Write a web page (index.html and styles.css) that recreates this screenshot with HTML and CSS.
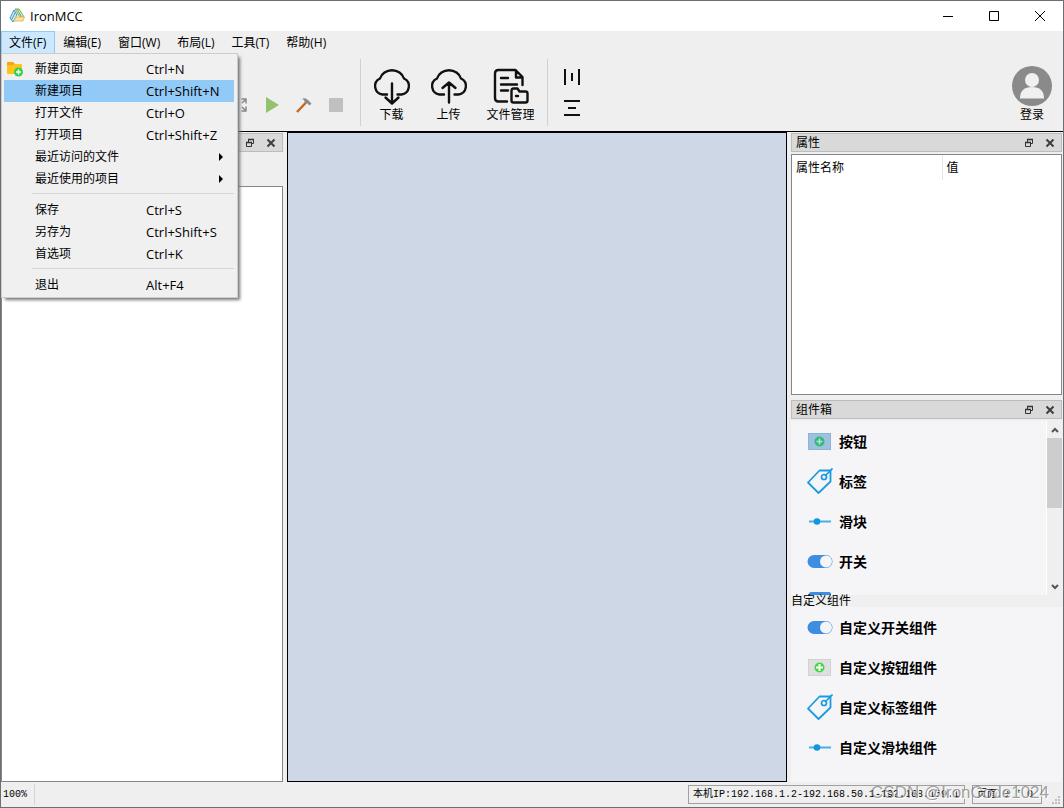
FILE: index.html
```html
<!DOCTYPE html>
<html lang="zh-CN">
<head>
<meta charset="utf-8">
<title>IronMCC</title>
<link rel="stylesheet" href="styles.css">
</head>
<body>
<svg class="defs" aria-hidden="true">
  <symbol id="float" viewBox="0 0 10 10"><path d="M3.500 4V1.500H8.500V5.500H7M1.500 4.500H6.500V8.500H1.500Z" fill="none" stroke="#333"/><path d="M3 1.500H9M1 4.500H7" stroke="#333" stroke-width="1.500"/></symbol>
  <symbol id="close" viewBox="0 0 10 10"><path d="M1.500 1.500L8.500 8.500M8.500 1.500L1.500 8.500" stroke="#3c3f3f" stroke-width="2"/></symbol>
  <symbol id="tag" viewBox="0 0 26 26"><path d="M1 14.500L12.500 2.500H23.500V13.500L11.500 25Z" fill="none" stroke="#1a9be0" stroke-width="1.800" stroke-linejoin="round"/><circle cx="17" cy="9" r="2.500" fill="none" stroke="#1a9be0" stroke-width="1.700"/><path d="M18 8L25.500 .5" stroke="#1a9be0" stroke-width="1.700"/></symbol>
  <symbol id="slider" viewBox="0 0 26 26"><path d="M2 13.500H24" stroke="#48aee6" stroke-width="2"/><circle cx="10" cy="13.500" r="3.300" fill="#1296db"/></symbol>
  <symbol id="switch" viewBox="0 0 26 26"><rect x=".5" y="7" width="25" height="13" rx="6.500" fill="#3d8ee0"/><circle cx="19" cy="13.500" r="6" fill="#f5f5f8"/></symbol>
  <symbol id="button-blue" viewBox="0 0 26 26"><rect x="1.500" y="5.500" width="22" height="16" fill="#9fc1e1" stroke="#8fb3d2"/><circle cx="12.500" cy="13.500" r="5" fill="#2ebd72"/><path d="M9.500 13.500H15.500M12.500 10.500V16.500" stroke="#c0d9ec" stroke-width="1.600"/></symbol>
  <symbol id="button-grey" viewBox="0 0 26 26"><rect x="1.500" y="5.500" width="22" height="16" fill="#dfdfdf" stroke="#d2d2d2"/><circle cx="12.500" cy="13.500" r="5" fill="#43d843"/><path d="M9 13.500H16M12.500 10V17" stroke="#fff" stroke-width="2"/></symbol>
</svg>
<div class="window">
  <header class="titlebar">
    <svg class="logo" viewBox="0 0 16 16"><path d="M6 1H10L15 9H11Z" fill="#dcebd0" stroke="#6fae5a"/><path d="M8 1L12.500 9" stroke="#6fae5a"/><path d="M5 2L8 7L4 14L1 10Z" fill="#d4ecf7" stroke="#3d95c4"/><path d="M6.500 4L2.500 12" stroke="#3d95c4"/><path d="M7 9H15.500L14 13H5Z" fill="#fae3a5" stroke="#e5bd61"/></svg>
    <h1 class="title">IronMCC</h1>
    <button class="winbtn" aria-label="最小化"><svg viewBox="0 0 10 10"><path d="M0 5.500H10"/></svg></button>
    <button class="winbtn" aria-label="最大化"><svg viewBox="0 0 10 10"><path d="M.5 .5H9.500V9.500H.5Z"/></svg></button>
    <button class="winbtn" aria-label="关闭"><svg viewBox="0 0 10 10"><path d="M0 0L10 10M10 0L0 10"/></svg></button>
  </header>
  <nav class="menubar">
    <div class="menuwrap">
      <button class="menu open" aria-expanded="true">文件(F)</button>
      <div class="dropdown" role="menu">
        <button class="item first" role="menuitem"><svg class="folder" viewBox="0 0 16 16"><path d="M0 2Q0 1 1 1H6L8 3H14Q15 3 15 4V12Q15 13 14 13H1Q0 13 0 12Z" fill="#fdc51b"/><path d="M0 4V2Q0 1 1 1H6L7.500 2.500L6 4Z" fill="#f5a416"/><circle cx="11.500" cy="11" r="4.500" fill="#35d04b"/><path d="M9 11H14M11.500 8.500V13.500" stroke="#fff" stroke-width="1.500"/></svg><span class="name">新建页面</span><kbd>Ctrl+N</kbd></button>
        <button class="item selected" role="menuitem"><span class="name">新建项目</span><kbd>Ctrl+Shift+N</kbd></button>
        <button class="item" role="menuitem"><span class="name">打开文件</span><kbd>Ctrl+O</kbd></button>
        <button class="item" role="menuitem"><span class="name">打开项目</span><kbd>Ctrl+Shift+Z</kbd></button>
        <button class="item" role="menuitem"><span class="name">最近访问的文件</span><i class="arrow"></i></button>
        <button class="item" role="menuitem"><span class="name">最近使用的项目</span><i class="arrow"></i></button>
        <hr>
        <button class="item" role="menuitem"><span class="name">保存</span><kbd>Ctrl+S</kbd></button>
        <button class="item" role="menuitem"><span class="name">另存为</span><kbd>Ctrl+Shift+S</kbd></button>
        <button class="item" role="menuitem"><span class="name">首选项</span><kbd>Ctrl+K</kbd></button>
        <hr>
        <button class="item" role="menuitem"><span class="name">退出</span><kbd>Alt+F4</kbd></button>
      </div>
    </div>
    <button class="menu">编辑(E)</button>
    <button class="menu">窗口(W)</button>
    <button class="menu">布局(L)</button>
    <button class="menu">工具(T)</button>
    <button class="menu">帮助(H)</button>
  </nav>
  <div class="toolbar">
    <div class="runtools">
      <button class="small" aria-label="全屏"><svg viewBox="0 0 16 16"><path d="M9.500 2H14V6.500M14 2L10 6M9.500 14H14V9.500M14 14L10 10M6.500 2H2V6.500M2 2L6 6M6.500 14H2V9.500M2 14L6 10" fill="none" stroke="#898989" stroke-width="1.500"/></svg></button>
      <button class="small" aria-label="运行"><svg viewBox="0 0 16 16"><path d="M2 0L15 8L2 16Z" fill="#93c26e"/></svg></button>
      <button class="small" aria-label="构建"><svg viewBox="0 0 16 16"><path d="M1 15L10 5.500" stroke="#c8681c" stroke-width="2.500"/><path d="M6 2Q9 0 12 3L15.500 6.500L13.500 8.500L11 6L9.500 6.500L8.500 5Q9 3 6 2Z" fill="#898989"/></svg></button>
      <button class="small" aria-label="停止"><svg viewBox="0 0 16 16"><rect x="1" y="1" width="14" height="14" rx="1" fill="#c0c0c0"/></svg></button>
    </div>
    <div class="group">
      <button class="tool"><svg viewBox="0 0 40 40"><path d="M15 28.500H10.500A8.800 8.500 0 0 1 8 12.500A12.500 11.500 0 0 1 32 12.500A8.800 8.500 0 0 1 29.500 28.500H25.500M20 17.500V37M13.500 31.500L20 37.500L26.500 31.500"/></svg>下载</button>
      <button class="tool"><svg viewBox="0 0 40 40"><path d="M15 28.500H10.500A8.800 8.500 0 0 1 8 12.500A12.500 11.500 0 0 1 32 12.500A8.800 8.500 0 0 1 29.500 28.500H25.500M20 36.500V17M13.500 22L20 16.500L26.500 22"/></svg>上传</button>
      <button class="tool"><svg viewBox="0 0 40 40"><path d="M16 35.500H7.500Q4 35.500 4 32V7.500Q4 4 7.500 4H24.500L31.500 11V19M25 4.500V11.500H31M10 12H17M10 18.500H26M10 24.500H17M20.500 25Q20.500 22.500 22.500 22.500H26.500L28.500 25.500H34.500Q36.500 25.500 36.500 27.500V34.500Q36.500 36.500 34.500 36.500H22.500Q20.500 36.500 20.500 34.500ZM25 30H27"/></svg>文件管理</button>
    </div>
    <div class="align">
      <button class="small" aria-label="水平分布"><svg viewBox="0 0 16 16"><path d="M1 0V16M8 4V12M15 0V16" stroke="#111" stroke-width="2"/></svg></button>
      <button class="small" aria-label="垂直分布"><svg viewBox="0 0 16 16"><path d="M0 1H16M4 8H12M0 15H16" stroke="#111" stroke-width="2"/></svg></button>
    </div>
    <button class="tool login"><svg class="avatar" viewBox="0 0 40 40"><circle cx="20" cy="20" r="20" fill="#8a8a8a"/><circle cx="20" cy="14" r="7" fill="#f0f0f0"/><path d="M8 32.500Q8 21 20 21Q32 21 32 32.500Z" fill="#f0f0f0"/></svg>登录</button>
  </div>
  <main class="work">
    <aside class="left">
      <div class="dockhead"><span></span><button aria-label="浮动"><svg><use href="#float"/></svg></button><button aria-label="关闭"><svg><use href="#close"/></svg></button></div>
      <div class="tree"></div>
    </aside>
    <section class="canvas"></section>
    <aside class="right">
      <div class="dockhead"><span>属性</span><button aria-label="浮动"><svg><use href="#float"/></svg></button><button aria-label="关闭"><svg><use href="#close"/></svg></button></div>
      <div class="props"><table><thead><tr><th class="key">属性名称</th><th>值</th></tr></thead></table></div>
      <div class="dockhead"><span>组件箱</span><button aria-label="浮动"><svg><use href="#float"/></svg></button><button aria-label="关闭"><svg><use href="#close"/></svg></button></div>
      <div class="box">
        <ul class="list">
          <li><svg><use href="#button-blue"/></svg><span>按钮</span></li>
          <li><svg><use href="#tag"/></svg><span>标签</span></li>
          <li><svg><use href="#slider"/></svg><span>滑块</span></li>
          <li><svg><use href="#switch"/></svg><span>开关</span></li>
          <li><svg viewBox="0 0 26 26"><rect x="2" y="4" width="22" height="18" rx="2" fill="#3d8ee0"/><circle cx="13" cy="11" r="4" fill="#9fc7ef"/></svg></li>
        </ul>
        <div class="scroll">
          <button aria-label="向上"><svg viewBox="0 0 8 8"><path d="M1 6L4 3L7 6"/></svg></button>
          <div class="track"><div class="thumb"></div></div>
          <button aria-label="向下"><svg viewBox="0 0 8 8"><path d="M1 2L4 5L7 2"/></svg></button>
        </div>
      </div>
      <h2 class="custom">自定义组件</h2>
      <ul class="list customs">
        <li><svg><use href="#switch"/></svg><span>自定义开关组件</span></li>
        <li><svg><use href="#button-grey"/></svg><span>自定义按钮组件</span></li>
        <li><svg><use href="#tag"/></svg><span>自定义标签组件</span></li>
        <li><svg><use href="#slider"/></svg><span>自定义滑块组件</span></li>
      </ul>
    </aside>
  </main>
  <footer class="status">
    <span class="zoom">100%</span>
    <span class="cell">本机IP:192.168.1.2-192.168.50.1-192.168.159.1</span>
    <span class="cell page">页面:0 * 0</span>
    <svg class="grip" viewBox="0 0 9 9"><path d="M6 0h2v2h-2zM3 3h2v2h-2zM6 3h2v2h-2zM0 6h2v2h-2zM3 6h2v2h-2zM6 6h2v2h-2z" fill="#bfbfbf"/></svg>
    <span class="watermark">CSDN @IronCode1024</span>
  </footer>
</div>
</body>
</html>
```
FILE: styles.css
```css
* { box-sizing: border-box; }
body { margin: 0; font: 12px/16px "Open Sans", "Noto Sans CJK SC", sans-serif; color: #000; }
button { margin: 0; padding: 0; border: 0; background: none; font: inherit; color: inherit; }
svg { display: block; flex: none; }
ul { margin: 0; padding: 0; list-style: none; }
.defs { display: none; }
.window { display: flex; flex-direction: column; height: 100vh; border: 1px solid #6d6d72; background: #efefef; }

.titlebar { display: flex; align-items: center; height: 30px; padding-left: 8px; background: #fff; }
.logo { width: 16px; height: 16px; }
.title { flex: 1; margin: 0 0 0 5px; font-size: 13px; font-weight: 400; }
.winbtn { display: flex; align-items: center; justify-content: center; width: 46px; height: 30px; }
.winbtn svg { width: 10px; height: 10px; fill: none; stroke: #000; }

.menubar { display: flex; height: 23px; }
.menuwrap { position: relative; }
.menu { height: 23px; padding: 1px 9px 0 8px; }
.menu.open { padding: 0 8px 0 7px; border: 1px solid #90c8f6; background: #cce8ff; }
.dropdown { position: absolute; z-index: 2; top: 22px; left: 0; width: 237px; padding: 3px 3px 1px 2px; border: 1px solid #ccc; background: #f0f0f0; box-shadow: 3px 3px 3px -1px #777; }
.item { position: relative; display: flex; align-items: center; width: 100%; height: 22px; padding-left: 31px; text-align: left; }
.item.first { height: 23px; }
.item.selected { background: #91c9f7; }
.folder { position: absolute; left: 3px; top: 4px; width: 16px; height: 16px; }
.name { width: 111px; }
kbd { font: inherit; font-size: 13px; white-space: nowrap; }
.arrow { margin-left: auto; margin-right: 11px; border: 4px solid transparent; border-left-color: #000; border-right: 0; }
.dropdown hr { margin: 3px 0 5px 28px; border: 0; border-top: 1px solid #d7d7d7; }

.toolbar { display: flex; align-items: stretch; height: 77px; padding: 5px 11px 5px 227px; }
.small { display: block; width: 16px; height: 16px; }
.small svg { width: 16px; height: 16px; }
.runtools { display: flex; gap: 16px; align-items: center; padding: 24px 16px 0 4px; }
.group { display: flex; border: solid #d0d0d0; border-width: 0 1px; padding: 0 3px 0 2px; }
.tool { display: flex; flex-direction: column; align-items: center; justify-content: flex-end; min-width: 57px; gap: 2px; line-height: 14px; padding-bottom: 4px; }
.tool svg { width: 40px; height: 40px; fill: none; stroke: #111; stroke-width: 2.4; stroke-linecap: round; stroke-linejoin: round; }
.tool:last-child { min-width: 67px; }
.login.tool { min-width: 40px; margin-left: auto; }
.tool .avatar { stroke: none; }
.align { display: flex; flex-direction: column; gap: 15px; padding: 10px 16px; }

.work { display: flex; flex: 1; min-height: 0; gap: 4px; padding-right: 1px; border-top: 1px solid #000; }
.left { display: flex; flex-direction: column; flex: 0 0 282px; padding-top: 1px; }
.dockhead { display: flex; flex: none; align-items: center; height: 19px; border: 1px solid #bcbcbc; background: #d9d9d9; padding-left: 4px; }
.dockhead span { flex: 1; padding-top: 1px; }
.dockhead button { width: 10px; height: 10px; margin-right: 11px; }
.dockhead button:last-child { margin-right: 6px; }
.dockhead svg { width: 10px; height: 10px; }
.tree { flex: 1; margin-top: 34px; border: 1px solid #828790; background: #fff; }
.canvas { flex: 1; border: 1px solid #000; background: #cdd7e6; }
.right { display: flex; flex-direction: column; flex: 0 0 271px; padding-top: 1px; }
.props { flex: 1 1 0; margin: 2px 0 5px; border: 1px solid #828790; background: #fff; }
table { width: 100%; border-collapse: collapse; }
th { height: 25px; padding: 0 4px; font-weight: 400; text-align: left; }
.key { width: 150px; border-right: 1px solid #e5e5e5; }
.box { display: flex; flex: none; height: 174px; margin-top: 2px; overflow: hidden; }
.list { flex: 1; background: #f5f5f8; font-size: 14px; font-weight: 700; }
.list li { display: flex; align-items: center; gap: 6px; height: 40px; padding-left: 16px; }
.list li svg { width: 26px; height: 26px; }
.list li span { padding-top: 1px; }
.scroll { display: flex; flex-direction: column; width: 16px; border-left: 1px solid #fff; }
.scroll button { display: flex; align-items: center; justify-content: center; height: 17px; }
.scroll button svg { width: 8px; height: 8px; fill: none; stroke: #555; stroke-width: 2; }
.track { flex: 1; }
.thumb { height: 70px; background: #cdcdcd; }
.custom { margin: 0; font-size: 12px; font-weight: 400; line-height: 12px; }
.customs { flex: none; height: 175px; }

.status { position: relative; display: flex; align-items: center; height: 25px; padding-right: 21px; font-family: "Liberation Mono", "Noto Sans CJK SC", monospace; font-size: 10px; }
.zoom { width: 34px; padding-left: 2px; border-right: 1px solid #d5d5d5; line-height: 21px; margin-right: auto; }
.cell { height: 19px; padding: 0 5px 0 4px; border: 1px solid #a0a0a0; line-height: 17px; white-space: nowrap; }
.page { margin-left: 7px; width: 70px; }
.grip { position: absolute; right: 2px; bottom: 2px; width: 9px; height: 9px; }
.watermark { position: absolute; right: 14px; top: 0; font: 17px/22px "Liberation Sans", sans-serif; color: rgba(110, 110, 110, .65); text-shadow: 1px 1px #fff; }
```
